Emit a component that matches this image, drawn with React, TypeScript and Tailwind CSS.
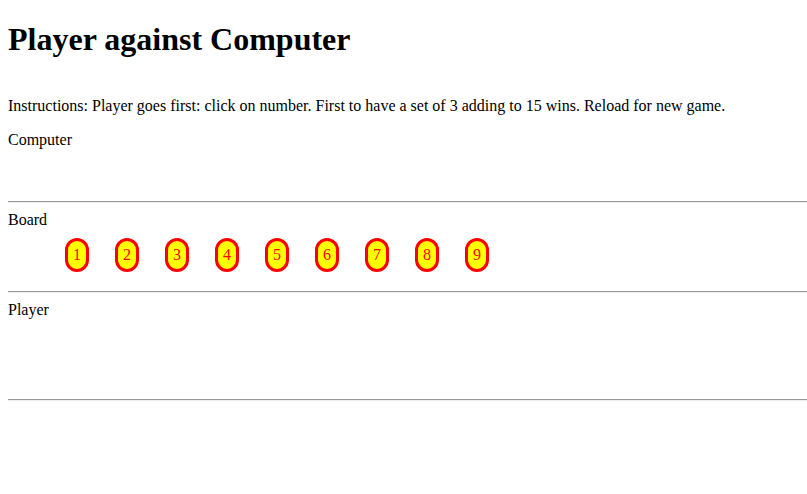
export default function App() {
  const numbers = [1, 2, 3, 4, 5, 6, 7, 8, 9];

  return (
    <div className="pl-2 font-['Liberation_Serif',serif] text-black">
      <h1 className="mt-[21px] mb-[39px] text-[32px] leading-[37px] font-bold">
        Player against Computer
      </h1>
      <p className="text-base leading-[18px]">
        Instructions: Player goes first: click on number. First to have a set of 3 adding to 15 wins. Reload for new game.
      </p>

      <div className="mt-4 h-[70px] leading-[18px]">Computer</div>
      <div className="h-[2px] border-t border-b border-t-[#9a9a9a] border-b-[#eeeeee]" />

      <div className="mt-[8px] leading-[18px]">Board</div>
      <div className="mt-[9px] flex gap-[26px] pl-[57px]">
        {numbers.map((n) => (
          <span
            key={n}
            className="flex h-[34px] w-6 items-center justify-center rounded-[12px] border-[3px] border-[#ff0000] bg-[#ffff00] leading-[18px] text-[#ff0000]"
          >
            {n}
          </span>
        ))}
      </div>
      <div className="mt-[19px] h-[2px] border-t border-b border-t-[#9a9a9a] border-b-[#eeeeee]" />

      <div className="mt-[8px] h-[98px] leading-[18px]">Player</div>
      <div className="h-[2px] border-t border-b border-t-[#9a9a9a] border-b-[#eeeeee]" />
    </div>
  );
}
